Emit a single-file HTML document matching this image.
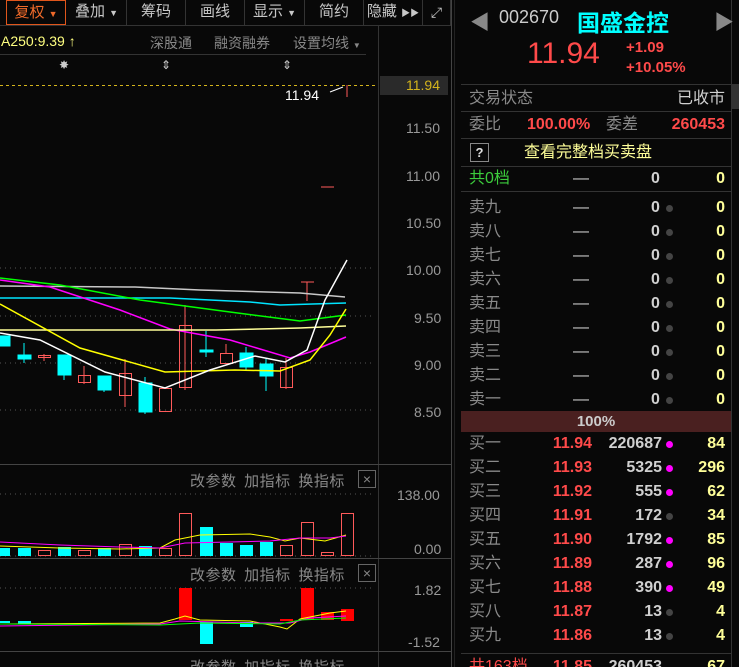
<!DOCTYPE html>
<html style="width:739px;height:667px;overflow:hidden"><head><meta charset="utf-8"><style>
*{margin:0;padding:0;box-sizing:border-box}
body{width:739px;height:667px;background:#080808;overflow:hidden;position:relative;font-family:"Liberation Sans","Noto Sans CJK SC",sans-serif;color:#aaa}
.a{position:absolute;white-space:nowrap}
.tb{position:absolute;top:0;height:25px;border-right:1px solid #333;color:#c8c8c8;font-size:15px;line-height:24px;text-align:center}
.r{position:absolute;left:461px;width:270px;height:24px;font-size:16px;line-height:24px}
.r span{position:absolute}
.gy{color:#8a8a8a}.rd{color:#ff4a4a}.wh{color:#d0d0d0}.yl{color:#ffff99}
.dot{position:absolute;width:7px;height:7px;border-radius:50%;top:9px;left:205px}
.pl{position:absolute;left:190px;font-size:15px;color:#888;letter-spacing:0.5px;word-spacing:3px;white-space:nowrap}
</style></head><body>
<div class="tb" style="left:6px;width:60px;border:1px solid #e0561c;color:#f06a2a">复权 <span style="font-size:9px">▼</span></div>
<div class="tb" style="left:67px;width:60px">叠加 <span style="font-size:9px">▼</span></div>
<div class="tb" style="left:127px;width:59px">筹码</div>
<div class="tb" style="left:186px;width:59px">画线</div>
<div class="tb" style="left:245px;width:60px">显示 <span style="font-size:9px">▼</span></div>
<div class="tb" style="left:305px;width:59px">简约</div>
<div class="tb" style="left:364px;width:59px">隐藏 <span style="font-size:9px">▶▶</span></div>
<div class="tb" style="left:423px;width:28px;font-size:14px">⤢</div>
<div class="a" style="left:0;top:25px;width:452px;height:1px;background:#333"></div>
<div class="a" style="left:1px;top:33px;font-size:14px;color:#ffff80">A250:9.39 ↑</div>
<div class="a" style="left:150px;top:33px;font-size:14px;color:#888">深股通</div>
<div class="a" style="left:214px;top:33px;font-size:14px;color:#888">融资融券</div>
<div class="a" style="left:293px;top:33px;font-size:14px;color:#888">设置均线 <span style="font-size:8px">▼</span></div>
<div class="a" style="left:0;top:54px;width:366px;height:1px;background:#333"></div>
<div class="a" style="left:59px;top:58px;font-size:12px;color:#ccc">✸</div>
<div class="a" style="left:161px;top:58px;font-size:12px;color:#ccc">⇕</div>
<div class="a" style="left:282px;top:58px;font-size:12px;color:#ccc">⇕</div>
<div class="a" style="left:378px;top:26px;width:1px;height:641px;background:#333"></div>
<div class="a" style="left:451px;top:0;width:1px;height:667px;background:#444"></div>
<div class="a" style="left:454px;top:0;width:1px;height:667px;background:#222"></div>
<div class="a" style="left:380px;top:76px;width:68px;height:19px;background:#2a2a2a"></div>
<div class="a" style="left:406px;top:77px;font-size:14px;color:#d4b41c">11.94</div>
<div class="a" style="left:406px;top:120px;font-size:14px;color:#999">11.50</div>
<div class="a" style="left:406px;top:168px;font-size:14px;color:#999">11.00</div>
<div class="a" style="left:406px;top:215px;font-size:14px;color:#999">10.50</div>
<div class="a" style="left:406px;top:262px;font-size:14px;color:#999">10.00</div>
<div class="a" style="left:414px;top:310px;font-size:14px;color:#999">9.50</div>
<div class="a" style="left:414px;top:357px;font-size:14px;color:#999">9.00</div>
<div class="a" style="left:414px;top:404px;font-size:14px;color:#999">8.50</div>
<div class="a" style="left:397px;top:487px;font-size:14px;color:#999">138.00</div>
<div class="a" style="left:414px;top:541px;font-size:14px;color:#999">0.00</div>
<div class="a" style="left:414px;top:582px;font-size:14px;color:#999">1.82</div>
<div class="a" style="left:408px;top:634px;font-size:14px;color:#999">-1.52</div>
<div class="a" style="left:285px;top:87px;font-size:14px;color:#fff">11.94</div>
<svg class="a" style="left:0;top:0" width="452" height="667">
<g stroke="#555" stroke-dasharray="1,4">
<line x1="0" y1="268" x2="372" y2="268"/><line x1="0" y1="316" x2="372" y2="316"/><line x1="0" y1="363" x2="372" y2="363"/><line x1="0" y1="410" x2="372" y2="410"/>
<line x1="0" y1="494" x2="372" y2="494"/><line x1="0" y1="556" x2="372" y2="556"/><line x1="0" y1="588" x2="372" y2="588"/>
</g>
<line x1="0" y1="85.5" x2="378" y2="85.5" stroke="#d4b41c" stroke-dasharray="3,3"/>
<line x1="330" y1="92" x2="343" y2="87" stroke="#fff"/>
<g stroke="#444"><line x1="0" y1="464.5" x2="452" y2="464.5"/><line x1="0" y1="558.5" x2="452" y2="558.5"/><line x1="0" y1="651.5" x2="452" y2="651.5"/></g>
<g fill="#00ffff" stroke="#00ffff">
<rect x="0" y="336" width="10" height="10"/>
<line x1="24" y1="343" x2="24" y2="363"/><rect x="18" y="355" width="13" height="4"/>
<line x1="64" y1="355" x2="64" y2="380"/><rect x="58" y="355" width="13" height="20"/>
<line x1="104" y1="376" x2="104" y2="392"/><rect x="98" y="376" width="13" height="14"/>
<line x1="145" y1="377" x2="145" y2="414"/><rect x="139" y="383" width="13" height="29"/>
<line x1="206" y1="331" x2="206" y2="357"/><rect x="200" y="350" width="13" height="2"/>
<line x1="246" y1="347" x2="246" y2="371"/><rect x="240" y="353" width="13" height="14"/>
<line x1="266" y1="359" x2="266" y2="391"/><rect x="260" y="364" width="13" height="12"/>
</g>
<g fill="none" stroke="#ff5a5a">
<line x1="44" y1="354" x2="44" y2="361"/><rect x="38.5" y="355.5" width="12" height="2"/>
<line x1="84" y1="366" x2="84" y2="384"/><rect x="78.5" y="375.5" width="12" height="7"/>
<line x1="125" y1="359" x2="125" y2="407"/><rect x="119.5" y="373.5" width="12" height="22"/>
<rect x="159.5" y="388.5" width="12" height="23"/>
<line x1="185" y1="305" x2="185" y2="390"/><rect x="179.5" y="325.5" width="12" height="62"/>
<line x1="226" y1="344" x2="226" y2="353"/><rect x="220.5" y="353.5" width="12" height="10"/>
<line x1="286" y1="358" x2="286" y2="389"/><rect x="280.5" y="367.5" width="12" height="20"/>
<line x1="301" y1="282" x2="314" y2="282"/><line x1="307" y1="282" x2="307" y2="301"/>
<line x1="321" y1="187" x2="334" y2="187"/>
<line x1="347" y1="85" x2="347" y2="97"/>
</g>
<g fill="none" stroke-width="1.5">
<polyline stroke="#c8c8c8" points="0,286 135,287 200,290 300,293 345,297"/>
<polyline stroke="#00e5ff" points="0,298 170,298 250,302 280,305 346,303"/>
<polyline stroke="#00ff00" points="0,278 60,285 140,300 230,312 300,321 346,315"/>
<polyline stroke="#ff00ff" points="0,280 50,287 120,310 170,329 230,340 290,358 310,352 346,337"/>
<polyline stroke="#ffff99" points="0,330 216,330 300,328 346,326"/>
<polyline stroke="#ffff00" points="0,304 80,348 165,372 235,370 280,371 310,360 330,335 346,309"/>
<polyline stroke="#fff" points="0,333 40,340 105,372 165,388 210,370 255,356 285,362 307,350 325,300 347,260"/>
</g>
<g fill="#00ffff"><rect x="0" y="548" width="10" height="8"/><rect x="18" y="548" width="13" height="8"/><rect x="58" y="547" width="13" height="9"/><rect x="98" y="548" width="13" height="8"/><rect x="139" y="546" width="13" height="10"/><rect x="200" y="527" width="13" height="29"/><rect x="220" y="543" width="13" height="13"/><rect x="240" y="545" width="13" height="11"/><rect x="260" y="542" width="13" height="14"/></g>
<g fill="none" stroke="#ff5a5a"><rect x="38.5" y="550.5" width="12" height="5"/><rect x="78.5" y="550.5" width="12" height="5"/><rect x="119.5" y="544.5" width="12" height="11"/><rect x="159.5" y="548.5" width="12" height="7"/><rect x="179.5" y="513.5" width="12" height="42"/><rect x="280.5" y="545.5" width="12" height="10"/><rect x="301.5" y="522.5" width="12" height="33"/><rect x="321.5" y="552.5" width="12" height="3"/><rect x="341.5" y="513.5" width="12" height="42"/></g>
<polyline fill="none" stroke="#ffff00" points="0,546 60,548 120,549 160,548 175,540 200,535 250,534 270,537 285,541 300,538 325,541 346,535"/>
<polyline fill="none" stroke="#ff00ff" points="0,542 60,545 120,547 160,548 185,543 230,542 270,541 300,538 330,538 346,536"/>
<g fill="#ff0000"><rect x="179" y="588" width="13" height="32"/><rect x="301" y="588" width="13" height="32"/><rect x="321" y="612" width="13" height="8"/><rect x="341" y="609" width="13" height="12"/><rect x="280" y="619" width="13" height="2"/></g>
<g fill="#00ffff"><rect x="200" y="622" width="13" height="22"/><rect x="240" y="622" width="13" height="5"/><rect x="0" y="621" width="10" height="2"/><rect x="18" y="621" width="13" height="3"/></g>
<polyline fill="none" stroke="#ffff00" points="0,624 160,623 175,619 185,616 200,620 250,621 280,627 287,629 300,619 330,613 346,611"/>
<polyline fill="none" stroke="#ff00ff" points="0,626 160,624 180,621 250,623 290,623 310,618 346,616"/>
<polyline fill="none" stroke="#00ff00" points="0,624 160,625 200,623 280,624 300,620 346,618"/>
</svg>
<div class="pl" style="top:470px">改参数 加指标 换指标</div>
<div class="a" style="left:358px;top:470px;width:18px;height:18px;border:1px solid #666;color:#888;font-size:14px;text-align:center;line-height:16px">×</div>
<div class="pl" style="top:564px">改参数 加指标 换指标</div>
<div class="a" style="left:358px;top:564px;width:18px;height:18px;border:1px solid #666;color:#888;font-size:14px;text-align:center;line-height:16px">×</div>
<div class="pl" style="top:656px">改参数 加指标 换指标</div>
<div class="a" style="left:731px;top:84px;width:8px;height:25px;background:#333"></div>
<div class="a" style="left:731px;top:0;width:1px;height:667px;background:#333"></div>
<div class="a" style="left:470px;top:6px;font-size:20px;color:#888">◀</div>
<div class="a" style="left:714px;top:6px;font-size:20px;color:#888">▶</div>
<div class="a" style="left:499px;top:7px;font-size:18px;color:#ccc">002670</div>
<div class="a" style="left:577px;top:4px;font-size:23px;color:#00ffff;font-weight:bold">国盛金控</div>
<div class="a" style="left:527px;top:37px;font-size:30px;color:#ff4a4a">11.94</div>
<div class="a" style="left:626px;top:39px;font-size:15px;color:#ff4a4a;font-weight:bold">+1.09</div>
<div class="a" style="left:626px;top:59px;font-size:15px;color:#ff4a4a;font-weight:bold">+10.05%</div>
<div class="a" style="left:461px;top:84px;width:270px;height:1px;background:#333"></div>
<div class="r" style="top:87px"><span class="gy" style="left:8px">交易状态</span><span class="wh" style="right:6px">已收市</span></div>
<div class="a" style="left:461px;top:111px;width:270px;height:1px;background:#333"></div>
<div class="r" style="top:113px"><span class="gy" style="left:8px">委比</span><span class="rd" style="left:66px;font-weight:bold">100.00%</span><span class="gy" style="left:145px">委差</span><span class="rd" style="right:6px;font-weight:bold">260453</span></div>
<div class="a" style="left:461px;top:138px;width:270px;height:1px;background:#333"></div>
<div class="a" style="left:470px;top:143px;width:19px;height:19px;border:1px solid #888;color:#ddd;font-size:13px;text-align:center;line-height:17px;font-weight:bold">?</div>
<div class="r" style="top:141px"><span class="yl" style="left:63px">查看完整档买卖盘</span></div>
<div class="a" style="left:461px;top:166px;width:270px;height:1px;background:#333"></div>
<div class="r" style="top:167px"><span style="left:8px;color:#3ccc3c">共0档</span><span class="wh" style="left:112px">—</span><span class="wh" style="left:190px;font-weight:bold">0</span><span class="yl" style="right:6px;font-weight:bold">0</span></div>
<div class="a" style="left:461px;top:191px;width:270px;height:1px;background:#333"></div>
<div class="r" style="top:196px"><span class="gy" style="left:8px">卖九</span><span class="wh" style="left:112px">—</span><span class="wh" style="left:190px;font-weight:bold">0</span><span class="dot" style="background:#444"></span><span class="yl" style="right:6px;font-weight:bold">0</span></div>
<div class="r" style="top:220px"><span class="gy" style="left:8px">卖八</span><span class="wh" style="left:112px">—</span><span class="wh" style="left:190px;font-weight:bold">0</span><span class="dot" style="background:#444"></span><span class="yl" style="right:6px;font-weight:bold">0</span></div>
<div class="r" style="top:244px"><span class="gy" style="left:8px">卖七</span><span class="wh" style="left:112px">—</span><span class="wh" style="left:190px;font-weight:bold">0</span><span class="dot" style="background:#444"></span><span class="yl" style="right:6px;font-weight:bold">0</span></div>
<div class="r" style="top:268px"><span class="gy" style="left:8px">卖六</span><span class="wh" style="left:112px">—</span><span class="wh" style="left:190px;font-weight:bold">0</span><span class="dot" style="background:#444"></span><span class="yl" style="right:6px;font-weight:bold">0</span></div>
<div class="r" style="top:292px"><span class="gy" style="left:8px">卖五</span><span class="wh" style="left:112px">—</span><span class="wh" style="left:190px;font-weight:bold">0</span><span class="dot" style="background:#444"></span><span class="yl" style="right:6px;font-weight:bold">0</span></div>
<div class="r" style="top:316px"><span class="gy" style="left:8px">卖四</span><span class="wh" style="left:112px">—</span><span class="wh" style="left:190px;font-weight:bold">0</span><span class="dot" style="background:#444"></span><span class="yl" style="right:6px;font-weight:bold">0</span></div>
<div class="r" style="top:340px"><span class="gy" style="left:8px">卖三</span><span class="wh" style="left:112px">—</span><span class="wh" style="left:190px;font-weight:bold">0</span><span class="dot" style="background:#444"></span><span class="yl" style="right:6px;font-weight:bold">0</span></div>
<div class="r" style="top:364px"><span class="gy" style="left:8px">卖二</span><span class="wh" style="left:112px">—</span><span class="wh" style="left:190px;font-weight:bold">0</span><span class="dot" style="background:#444"></span><span class="yl" style="right:6px;font-weight:bold">0</span></div>
<div class="r" style="top:388px"><span class="gy" style="left:8px">卖一</span><span class="wh" style="left:112px">—</span><span class="wh" style="left:190px;font-weight:bold">0</span><span class="dot" style="background:#444"></span><span class="yl" style="right:6px;font-weight:bold">0</span></div>
<div class="a" style="left:461px;top:411px;width:270px;height:21px;background:#4a2020;color:#ccc;font-size:15px;font-weight:bold;text-align:center;line-height:21px">100%</div>
<div class="r" style="top:432px"><span class="gy" style="left:8px">买一</span><span class="rd" style="right:139px;font-weight:bold">11.94</span><span class="wh" style="right:69px;font-weight:bold">220687</span><span class="dot" style="background:#f0f"></span><span class="yl" style="right:6px;font-weight:bold">84</span></div>
<div class="r" style="top:456px"><span class="gy" style="left:8px">买二</span><span class="rd" style="right:139px;font-weight:bold">11.93</span><span class="wh" style="right:69px;font-weight:bold">5325</span><span class="dot" style="background:#f0f"></span><span class="yl" style="right:6px;font-weight:bold">296</span></div>
<div class="r" style="top:480px"><span class="gy" style="left:8px">买三</span><span class="rd" style="right:139px;font-weight:bold">11.92</span><span class="wh" style="right:69px;font-weight:bold">555</span><span class="dot" style="background:#f0f"></span><span class="yl" style="right:6px;font-weight:bold">62</span></div>
<div class="r" style="top:504px"><span class="gy" style="left:8px">买四</span><span class="rd" style="right:139px;font-weight:bold">11.91</span><span class="wh" style="right:69px;font-weight:bold">172</span><span class="dot" style="background:#444"></span><span class="yl" style="right:6px;font-weight:bold">34</span></div>
<div class="r" style="top:528px"><span class="gy" style="left:8px">买五</span><span class="rd" style="right:139px;font-weight:bold">11.90</span><span class="wh" style="right:69px;font-weight:bold">1792</span><span class="dot" style="background:#f0f"></span><span class="yl" style="right:6px;font-weight:bold">85</span></div>
<div class="r" style="top:552px"><span class="gy" style="left:8px">买六</span><span class="rd" style="right:139px;font-weight:bold">11.89</span><span class="wh" style="right:69px;font-weight:bold">287</span><span class="dot" style="background:#f0f"></span><span class="yl" style="right:6px;font-weight:bold">96</span></div>
<div class="r" style="top:576px"><span class="gy" style="left:8px">买七</span><span class="rd" style="right:139px;font-weight:bold">11.88</span><span class="wh" style="right:69px;font-weight:bold">390</span><span class="dot" style="background:#f0f"></span><span class="yl" style="right:6px;font-weight:bold">49</span></div>
<div class="r" style="top:600px"><span class="gy" style="left:8px">买八</span><span class="rd" style="right:139px;font-weight:bold">11.87</span><span class="wh" style="right:69px;font-weight:bold">13</span><span class="dot" style="background:#444"></span><span class="yl" style="right:6px;font-weight:bold">4</span></div>
<div class="r" style="top:624px"><span class="gy" style="left:8px">买九</span><span class="rd" style="right:139px;font-weight:bold">11.86</span><span class="wh" style="right:69px;font-weight:bold">13</span><span class="dot" style="background:#444"></span><span class="yl" style="right:6px;font-weight:bold">4</span></div>
<div class="a" style="left:461px;top:653px;width:270px;height:1px;background:#333"></div>
<div class="r" style="top:655px;height:12px;overflow:hidden"><span style="left:8px;color:#ff4a4a">共163档</span><span class="rd" style="right:139px;font-weight:bold">11.85</span><span class="wh" style="right:69px;font-weight:bold">260453</span><span class="yl" style="right:6px;font-weight:bold">67</span></div>
</body></html>
